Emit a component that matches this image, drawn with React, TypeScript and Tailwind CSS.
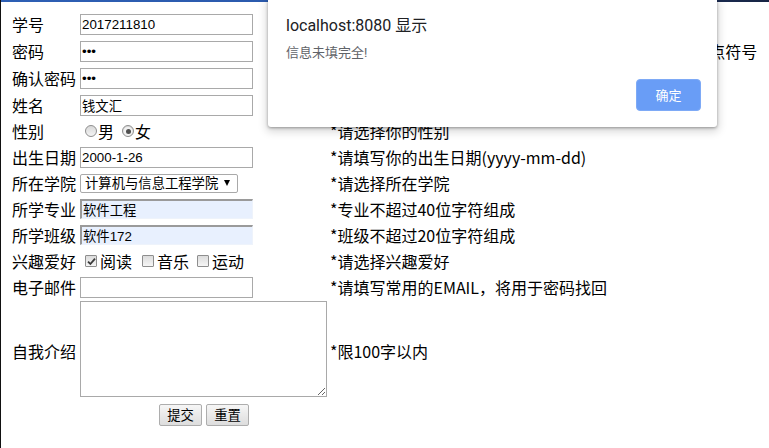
import React from "react";

const inputCls =
  "w-[173px] h-[21px] border border-[#a9a9a9] bg-white px-[1px] text-[13.33px] leading-[15px] text-black outline-none [font-family:'Liberation_Sans','Noto_Sans_CJK_SC',sans-serif]";

const autoCls =
  "w-[173px] h-[20px] border-t-2 border-l-2 border-b border-r border-t-[#9a9a9a] border-l-[#9a9a9a] border-b-[#eef3fb] border-r-[#eef3fb] bg-[#e8f0fe] px-[1px] text-[13.33px] leading-[15px] text-black outline-none [font-family:'Liberation_Sans','Noto_Sans_CJK_SC',sans-serif]";

function Row({
  h,
  label,
  hint,
  children,
}: {
  h: string;
  label: string;
  hint?: string;
  children?: React.ReactNode;
}) {
  return (
    <div className={`flex items-center ${h}`}>
      <div className="w-[68px] shrink-0 whitespace-nowrap">{label}</div>
      <div className="w-[250px] shrink-0 flex items-center">{children}</div>
      {hint && <div className="whitespace-nowrap">{hint}</div>}
    </div>
  );
}

function Radio({ checked }: { checked?: boolean }) {
  return (
    <span className="inline-flex items-center justify-center w-[12px] h-[12px] rounded-full border border-[#8e8e8e] bg-linear-to-b from-[#d8d8d8] to-[#f4f4f4]">
      {checked && (
        <span className="inline-flex items-center justify-center w-[8px] h-[8px] rounded-full bg-[#f2f2f2]">
          <span className="w-[5px] h-[5px] rounded-full bg-[#505050]" />
        </span>
      )}
    </span>
  );
}

function Check({ checked }: { checked?: boolean }) {
  return (
    <span className="inline-flex items-center justify-center w-[12px] h-[12px] rounded-[1px] border border-[#8e8e8e] bg-linear-to-b from-[#dcdcdc] to-[#f6f6f6]">
      {checked && (
        <svg width="9" height="9" viewBox="0 0 9 9">
          <path d="M1 4.6 L3.4 7 L8 1.6" fill="none" stroke="#3c3c3c" strokeWidth="1.8" />
        </svg>
      )}
    </span>
  );
}

export default function App() {
  return (
    <div className="relative w-[769px] h-[448px] overflow-hidden bg-white text-black text-[16px] leading-[21px] [font-family:'Noto_Sans_CJK_SC',sans-serif]">
      <div className="pt-[11px] pl-[12px]">
        <Row h="h-[27px]" label="学号">
          <input readOnly value="2017211810" className={inputCls} />
        </Row>
        <Row h="h-[27px]" label="密码" hint="*密码由6-16 位字母、数字或下划线等组成，可包含标点符号">
          <input readOnly type="password" value="123" className={inputCls} />
        </Row>
        <Row h="h-[27px]" label="确认密码">
          <input readOnly type="password" value="123" className={inputCls} />
        </Row>
        <Row h="h-[26px]" label="姓名">
          <input readOnly value="钱文汇" className={inputCls} />
        </Row>
        <Row h="h-[26px]" label="性别" hint="*请选择你的性别">
          <span className="ml-[5px] flex items-center">
            <Radio />
          </span>
          <span className="ml-[1px]">男</span>
          <span className="ml-[8px] flex items-center">
            <Radio checked />
          </span>
          <span className="ml-[1px]">女</span>
        </Row>
        <Row h="h-[26px]" label="出生日期" hint="*请填写你的出生日期(yyyy-mm-dd)">
          <input readOnly value="2000-1-26" className={inputCls} />
        </Row>
        <Row h="h-[26px]" label="所在学院" hint="*请选择所在学院">
          <div className="w-[158px] h-[19px] border border-[#a9a9a9] rounded-[2px] bg-white flex items-center pl-[4px] pr-[7px] text-[13.33px] leading-[15px] [font-family:'Liberation_Sans','Noto_Sans_CJK_SC',sans-serif]">
            <span className="flex-1 whitespace-nowrap">计算机与信息工程学院</span>
            <svg width="6" height="6" viewBox="0 0 6 6">
              <path d="M0 0 H6 L3 6 Z" fill="#000" />
            </svg>
          </div>
        </Row>
        <Row h="h-[26px]" label="所学专业" hint="*专业不超过40位字符组成">
          <input readOnly value="软件工程" className={autoCls} />
        </Row>
        <Row h="h-[26px]" label="所学班级" hint="*班级不超过20位字符组成">
          <input readOnly value="软件172" className={autoCls} />
        </Row>
        <Row h="h-[26px]" label="兴趣爱好" hint="*请选择兴趣爱好">
          <span className="ml-[5px] flex items-center">
            <Check checked />
          </span>
          <span className="ml-[3px]">阅读</span>
          <span className="ml-[10px] flex items-center">
            <Check />
          </span>
          <span className="ml-[3px]">音乐</span>
          <span className="ml-[8px] flex items-center">
            <Check />
          </span>
          <span className="ml-[3px]">运动</span>
        </Row>
        <Row h="h-[26px]" label="电子邮件" hint="*请填写常用的EMAIL，将用于密码找回">
          <input readOnly value="" className={inputCls} />
        </Row>
        <div className="flex items-center h-[103px]">
          <div className="w-[68px] shrink-0 whitespace-nowrap">自我介绍</div>
          <div className="w-[250px] shrink-0 self-start pt-[1px]">
            <textarea
              readOnly
              className="block w-[247px] h-[96px] border border-[#a9a9a9] bg-white outline-none"
            />
          </div>
          <div className="whitespace-nowrap">*限100字以内</div>
        </div>
        <div className="flex h-[28px] pt-[1px]">
          <div className="w-[68px] shrink-0" />
          <div className="w-[248px] shrink-0 flex justify-center gap-[4px]">
            <button className="w-[43px] h-[22px] border border-[#adadad] rounded-[2px] bg-linear-to-b from-[#f6f6f6] to-[#dddddd] text-[13.33px] leading-[16px] text-black">
              提交
            </button>
            <button className="w-[43px] h-[22px] border border-[#adadad] rounded-[2px] bg-linear-to-b from-[#f6f6f6] to-[#dddddd] text-[13.33px] leading-[16px] text-black">
              重置
            </button>
          </div>
        </div>
      </div>

      {/* window edges */}
      <div className="absolute left-0 right-0 top-0 h-[2px] bg-linear-to-r from-[#2d5fb4] via-[#2a58aa] to-[#172443]" />
      <div className="absolute left-0 top-0 bottom-0 w-[1px] bg-[#111]" />

      {/* alert dialog */}
      <div className="absolute left-[268px] top-0 w-[449px] h-[127px] bg-white rounded-b-[3px] shadow-[0_1px_3px_rgba(0,0,0,0.35),0_3px_8px_2px_rgba(0,0,0,0.15)] [font-family:Roboto,'Noto_Sans_CJK_SC',sans-serif]">
        <div className="absolute left-[18px] top-[16px] text-[16px] leading-[20px] text-[#202124] whitespace-nowrap">
          localhost:8080 显示
        </div>
        <div className="absolute left-[18px] top-[45px] text-[13px] leading-[16px] text-[#5f6368] whitespace-nowrap">
          信息未填完全!
        </div>
        <div className="absolute right-[16px] bottom-[16px] w-[65px] h-[32px] rounded-[4px] bg-[#699df6] border border-[#7eaaf6] flex items-center justify-center text-[13px] text-white">
          确定
        </div>
      </div>
    </div>
  );
}
